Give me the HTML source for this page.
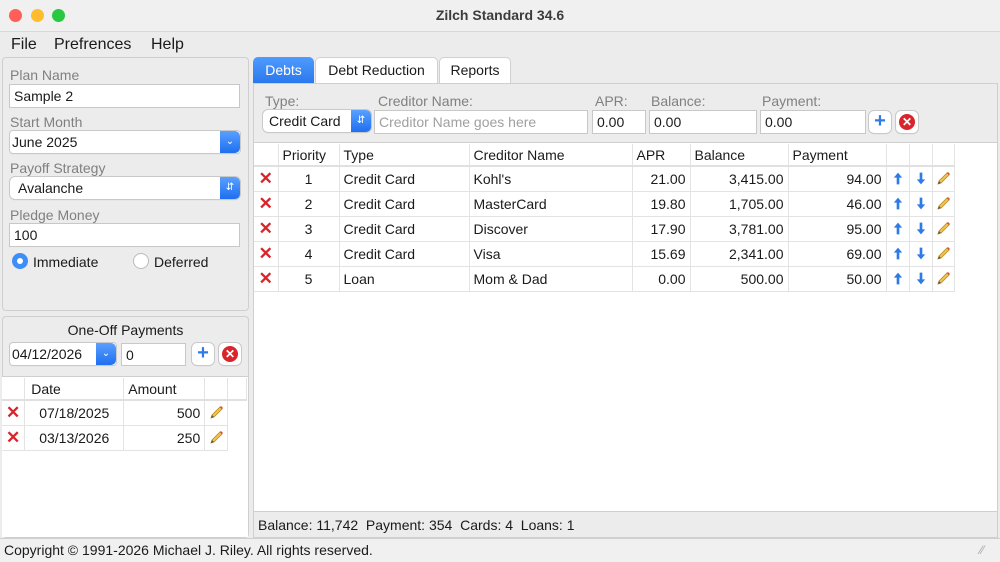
<!DOCTYPE html>
<html><head><meta charset="utf-8"><style>
*{box-sizing:border-box;margin:0;padding:0}
body{width:1000px;height:562px;overflow:hidden;background:#ececec;font-family:"Liberation Sans",sans-serif;font-size:14px;color:#1a1a1a;position:relative}
.a{position:absolute}
.lbl{color:#808080;font-size:14px}
.inp{position:absolute;background:#fff;border:1px solid #c8c8c8;height:24px;padding:2px 4px;font-size:14px;line-height:19px}
.sel{position:absolute;background:#fff;border-radius:5px;box-shadow:0 0 0 1px #c9c9c9,0 1px 1px rgba(0,0,0,.15);height:22px;font-size:14px;line-height:22px;padding-left:8px}
.sel .b{position:absolute;right:0;top:0;bottom:0;width:20px;background:linear-gradient(#5aa0ff,#1e6ff0);border-radius:0 5px 5px 0;color:#fff;font-size:10px;text-align:center;line-height:22px}
table{border-collapse:collapse;position:absolute;background:#fff}
td{border-right:1px solid #e3e3e3;border-bottom:1px solid #e3e3e3;height:25px;padding:0 4px;font-size:14px;white-space:nowrap}
tr.h td{height:22px;border-bottom:2px solid #e0e0e0}
.r{text-align:right}.c{text-align:center}
.x{color:#d9242b;font-weight:bold;font-size:17px;text-align:center}
td.i{text-align:center;padding:0}
td.i svg{display:block;margin:0 auto}
.btn{position:absolute;width:22px;height:22px;background:#fff;border-radius:5px;box-shadow:0 0 0 1px #c9c9c9,0 1px 1px rgba(0,0,0,.15)}
.box{position:absolute;border:1px solid #cfcfcf;border-radius:4px;background:#ececec}
</style></head><body>
<svg width="0" height="0" style="position:absolute">
<defs>
<symbol id="up" viewBox="0 0 12 16"><path d="M6 1 L11 7 H7.6 V15 H4.4 V7 H1 Z" fill="#2f7be5"/></symbol>
<symbol id="dn" viewBox="0 0 12 16"><path d="M6 15 L11 9 H7.6 V1 H4.4 V9 H1 Z" fill="#2f7be5"/></symbol>
<symbol id="pen" viewBox="0 0 16 16"><path d="M3 13 L4 10 L12 2 L14 4 L6 12 Z" fill="#f2c44e" stroke="#b98a20" stroke-width="0.8"/><path d="M12 2 L14 4 L15 3 L13 1 Z" fill="#e0463a"/><path d="M3 13 L4 10 L6 12 Z" fill="#555"/></symbol>
</defs></svg>
<div class="a" style="left:0;top:0;width:1000px;height:32px;background:#f0f0f0;border-bottom:1px solid #d8d8d8"></div>
<div class="a" style="left:9px;top:9px;width:13px;height:13px;border-radius:50%;background:#fe5f57"></div>
<div class="a" style="left:31px;top:9px;width:13px;height:13px;border-radius:50%;background:#febc2e"></div>
<div class="a" style="left:52px;top:9px;width:13px;height:13px;border-radius:50%;background:#28c840"></div>
<div class="a" style="left:0;top:7px;width:1000px;text-align:center;font-weight:bold;color:#3c3c3c;font-size:14px">Zilch Standard 34.6</div>
<div class="a" style="left:11px;top:36px;font-size:16px">File</div>
<div class="a" style="left:54px;top:36px;font-size:16px">Prefrences</div>
<div class="a" style="left:151px;top:36px;font-size:16px">Help</div>

<div class="box" style="left:2px;top:57px;width:247px;height:254px"></div>
<div class="a lbl" style="left:10px;top:67px">Plan Name</div>
<div class="inp" style="left:9px;top:84px;width:231px">Sample 2</div>
<div class="a lbl" style="left:10px;top:114px">Start Month</div>
<div class="sel" style="left:10px;top:131px;width:230px;border-radius:3px;padding-left:2px">June 2025<div class="b">&#8964;</div></div>
<div class="a lbl" style="left:10px;top:160px">Payoff Strategy</div>
<div class="sel" style="left:10px;top:177px;width:230px">Avalanche<div class="b">&#8693;</div></div>
<div class="a lbl" style="left:10px;top:207px">Pledge Money</div>
<div class="inp" style="left:9px;top:223px;width:231px">100</div>
<div class="a" style="left:12px;top:253px;width:16px;height:16px;border-radius:50%;background:#3d8ef7"><div class="a" style="left:5px;top:5px;width:6px;height:6px;border-radius:50%;background:#fff"></div></div>
<div class="a" style="left:33px;top:254px">Immediate</div>
<div class="a" style="left:133px;top:253px;width:16px;height:16px;border-radius:50%;background:#fff;border:1px solid #bbb"></div>
<div class="a" style="left:154px;top:254px">Deferred</div>

<div class="box" style="left:2px;top:316px;width:247px;height:222px"></div>
<div class="a" style="left:2px;top:322px;width:247px;text-align:center">One-Off Payments</div>
<div class="sel" style="left:10px;top:343px;width:106px;border-radius:3px;padding-left:2px">04/12/2026<div class="b">&#8964;</div></div>
<div class="inp" style="left:121px;top:343px;width:65px;height:23px">0</div>
<div class="btn" style="left:192px;top:343px;color:#2f7be5;font-weight:bold;font-size:20px;text-align:center;line-height:21px">+</div>
<div class="btn" style="left:219px;top:343px"><div class="a" style="left:3px;top:3px;width:16px;height:16px;border-radius:50%;background:#d9242b;color:#fff;font-size:12px;font-weight:bold;text-align:center;line-height:16px">✕</div></div>
<div class="a" style="left:2px;top:376px;width:246px;height:161px;background:#fff;border-top:1px solid #cfcfcf"></div>
<table style="left:2px;top:378px">
<tr class="h"><td style="width:22px"></td><td style="width:99px;padding-left:6px">Date</td><td style="width:81px">Amount</td><td style="width:23px"></td><td style="width:19px"></td></tr>
<tr><td class="x">✕</td><td class="c">07/18/2025</td><td class="r">500</td><td class="i"><svg width="16" height="16"><use href="#pen"/></svg></td></tr>
<tr><td class="x">✕</td><td class="c">03/13/2026</td><td class="r">250</td><td class="i"><svg width="16" height="16"><use href="#pen"/></svg></td></tr>
</table>

<div class="a" style="left:253px;top:57px;width:61px;height:26px;background:linear-gradient(#4f9bff,#2a78ec);color:#fff;border-radius:5px 5px 0 0;text-align:center;line-height:26px">Debts</div>
<div class="a" style="left:315px;top:57px;width:123px;height:26px;background:#fff;border:1px solid #d0d0d0;border-bottom:none;border-radius:5px 5px 0 0;text-align:center;line-height:25px">Debt Reduction</div>
<div class="a" style="left:439px;top:57px;width:72px;height:26px;background:#fff;border:1px solid #d0d0d0;border-bottom:none;border-radius:5px 5px 0 0;text-align:center;line-height:25px">Reports</div>
<div class="a" style="left:253px;top:83px;width:745px;height:455px;border:1px solid #cfcfcf;background:#ececec"></div>
<div class="a lbl" style="left:265px;top:93px">Type:</div>
<div class="a lbl" style="left:378px;top:93px">Creditor Name:</div>
<div class="a lbl" style="left:595px;top:93px">APR:</div>
<div class="a lbl" style="left:651px;top:93px">Balance:</div>
<div class="a lbl" style="left:762px;top:93px">Payment:</div>
<div class="sel" style="left:263px;top:110px;width:108px;padding-left:6px">Credit Card<div class="b">&#8693;</div></div>
<div class="inp" style="left:374px;top:110px;width:214px;color:#a0a0a0">Creditor Name goes here</div>
<div class="inp" style="left:592px;top:110px;width:54px">0.00</div>
<div class="inp" style="left:649px;top:110px;width:108px">0.00</div>
<div class="inp" style="left:760px;top:110px;width:106px">0.00</div>
<div class="btn" style="left:869px;top:111px;color:#2f7be5;font-weight:bold;font-size:20px;text-align:center;line-height:21px">+</div>
<div class="btn" style="left:896px;top:111px"><div class="a" style="left:3px;top:3px;width:16px;height:16px;border-radius:50%;background:#d9242b;color:#fff;font-size:12px;font-weight:bold;text-align:center;line-height:16px">✕</div></div>
<div class="a" style="left:254px;top:142px;width:743px;height:369px;background:#fff;border-top:1px solid #cfcfcf"></div>
<table style="left:254px;top:144px">
<tr class="h"><td style="width:24px"></td><td style="width:61px;padding-left:4px">Priority</td><td style="width:130px">Type</td><td style="width:163px">Creditor Name</td><td style="width:58px">APR</td><td style="width:98px">Balance</td><td style="width:98px">Payment</td><td style="width:23px"></td><td style="width:23px"></td><td style="width:22px"></td></tr>
<tr><td class="x">✕</td><td class="c">1</td><td>Credit Card</td><td>Kohl's</td><td class="r">21.00</td><td class="r">3,415.00</td><td class="r">94.00</td><td class="i"><svg width="10" height="15"><use href="#up"/></svg></td><td class="i"><svg width="10" height="15"><use href="#dn"/></svg></td><td class="i"><svg width="16" height="16"><use href="#pen"/></svg></td></tr>
<tr><td class="x">✕</td><td class="c">2</td><td>Credit Card</td><td>MasterCard</td><td class="r">19.80</td><td class="r">1,705.00</td><td class="r">46.00</td><td class="i"><svg width="10" height="15"><use href="#up"/></svg></td><td class="i"><svg width="10" height="15"><use href="#dn"/></svg></td><td class="i"><svg width="16" height="16"><use href="#pen"/></svg></td></tr>
<tr><td class="x">✕</td><td class="c">3</td><td>Credit Card</td><td>Discover</td><td class="r">17.90</td><td class="r">3,781.00</td><td class="r">95.00</td><td class="i"><svg width="10" height="15"><use href="#up"/></svg></td><td class="i"><svg width="10" height="15"><use href="#dn"/></svg></td><td class="i"><svg width="16" height="16"><use href="#pen"/></svg></td></tr>
<tr><td class="x">✕</td><td class="c">4</td><td>Credit Card</td><td>Visa</td><td class="r">15.69</td><td class="r">2,341.00</td><td class="r">69.00</td><td class="i"><svg width="10" height="15"><use href="#up"/></svg></td><td class="i"><svg width="10" height="15"><use href="#dn"/></svg></td><td class="i"><svg width="16" height="16"><use href="#pen"/></svg></td></tr>
<tr><td class="x">✕</td><td class="c">5</td><td>Loan</td><td>Mom &amp; Dad</td><td class="r">0.00</td><td class="r">500.00</td><td class="r">50.00</td><td class="i"><svg width="10" height="15"><use href="#up"/></svg></td><td class="i"><svg width="10" height="15"><use href="#dn"/></svg></td><td class="i"><svg width="16" height="16"><use href="#pen"/></svg></td></tr>
</table>
<div class="a" style="left:254px;top:511px;width:743px;border-top:1px solid #cfcfcf"></div>
<div class="a" style="left:258px;top:517px">Balance: 11,742&nbsp; Payment: 354&nbsp; Cards: 4&nbsp; Loans: 1</div>
<div class="a" style="left:0;top:538px;width:1000px;height:24px;background:#f0f0f0;border-top:1px solid #d0d0d0"></div>
<div class="a" style="left:4px;top:542px">Copyright © 1991-2026 Michael J. Riley. All rights reserved.</div>
<div class="a" style="left:980px;top:543px;color:#aaa;font-size:12px">⁄⁄</div>
</body></html>
